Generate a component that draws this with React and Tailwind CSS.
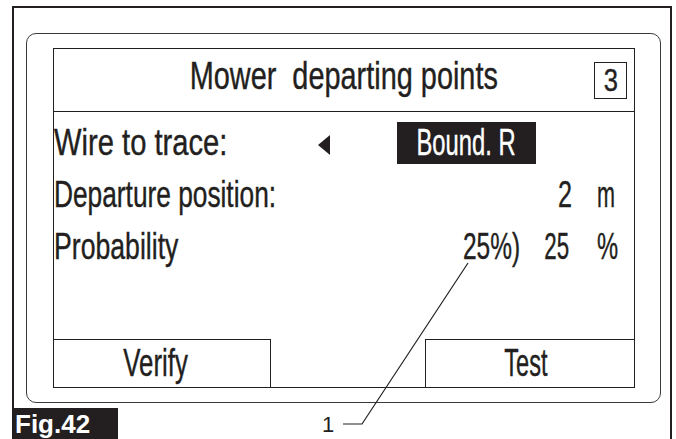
import React from "react";

const sans = "font-['Liberation_Sans',Arial,sans-serif]";

export default function App() {
  return (
    <div className="relative w-[676px] h-[439px] overflow-hidden bg-white text-[#231f20]">
      <div className="pt-[6px] pl-[12px]">
        <div className="w-[660px] h-[433px] border-t-2 border-x-2 border-[#231f20] pl-[12px] pt-[25px]">
          <div className="w-[635px] h-[370px] border-[1.5px] border-[#3a3a3a] rounded-[10px] flex items-center justify-center">
            <div className={`w-[582px] h-[340px] border-[1.5px] border-[#231f20] flex flex-col ${sans} [-webkit-text-stroke:0.4px_currentColor]`}>
              <div className="relative h-[63px] shrink-0 border-b-[1.5px] border-[#231f20] pt-[8px] text-center text-[38px] leading-none">
                <span className="inline-block whitespace-pre scale-x-[0.76] origin-center">Mower  departing points</span>
                <div className="absolute right-[6.5px] top-[12.5px] w-[33px] h-[37px] border-[1.5px] border-[#231f20] flex items-center justify-center text-[32px] leading-none">
                  <span className="inline-block scale-x-[0.8] origin-center">3</span>
                </div>
              </div>
              <div className="flex flex-col gap-[16px] pt-[13px] text-[36px] leading-none">
                <div className="flex items-center h-[36px]">
                  <div className="w-[264.5px]">
                    <span className="inline-block whitespace-nowrap scale-x-[0.81] origin-left">Wire to trace:</span>
                  </div>
                  <svg width="12" height="20" viewBox="0 0 12 20" className="mt-[4px]">
                    <polygon points="12,0 12,20 0,10" fill="#231f20" />
                  </svg>
                  <div className="ml-[67px] w-[139px] h-[42px] bg-[#231f20] text-white flex items-center justify-center">
                    <span className="inline-block whitespace-nowrap scale-x-[0.66] origin-center">Bound. R</span>
                  </div>
                </div>
                <div className="flex items-center h-[36px]">
                  <div className="flex-1">
                    <span className="inline-block whitespace-nowrap scale-x-[0.73] origin-left">Departure position:</span>
                  </div>
                  <span className="inline-block scale-x-[0.7] origin-right">2</span>
                  <span className="w-[25px]" />
                  <div className="w-[36.5px]">
                    <span className="inline-block scale-x-[0.6] origin-left">m</span>
                  </div>
                </div>
                <div className="flex items-center h-[36px]">
                  <div className="flex-1">
                    <span className="inline-block whitespace-nowrap scale-x-[0.74] origin-left">Probability</span>
                  </div>
                  <div className="w-[57px]">
                    <span className="inline-block whitespace-nowrap scale-x-[0.68] origin-left">25%)</span>
                  </div>
                  <span className="w-[9px]" />
                  <span className="inline-block scale-x-[0.62] origin-right">25</span>
                  <span className="w-[28px]" />
                  <div className="w-[36.5px]">
                    <span className="inline-block scale-x-[0.66] origin-left">%</span>
                  </div>
                </div>
              </div>
              <div className="mt-auto flex h-[48.5px] text-[38px] leading-none">
                <div className="w-[217px] border-t-[1.5px] border-r-[1.5px] border-[#231f20] flex items-center justify-center pr-[12px]">
                  <span className="inline-block scale-x-[0.68] origin-center">Verify</span>
                </div>
                <div className="flex-1" />
                <div className="w-[208.5px] border-t-[1.5px] border-l-[1.5px] border-[#231f20] flex items-center justify-center pr-[8px]">
                  <span className="inline-block scale-x-[0.62] origin-center">Test</span>
                </div>
              </div>
            </div>
          </div>
          <div className="mt-[5px] -ml-[14px] w-[106px] h-[31px] bg-[#231f20] text-white font-['Liberation_Sans',Arial,sans-serif] font-bold text-[26px] leading-[32px] pl-[3px]">
            Fig.42
          </div>
        </div>
      </div>
      <svg className="absolute inset-0 pointer-events-none" width="676" height="439" viewBox="0 0 676 439">
        <path d="M468 263 L362 424 L343 424" fill="none" stroke="#231f20" strokeWidth="1.2" />
      </svg>
      <span className="absolute left-[322px] top-[414px] font-['Liberation_Sans',Arial,sans-serif] text-[22px] leading-none">
        1
      </span>
    </div>
  );
}
